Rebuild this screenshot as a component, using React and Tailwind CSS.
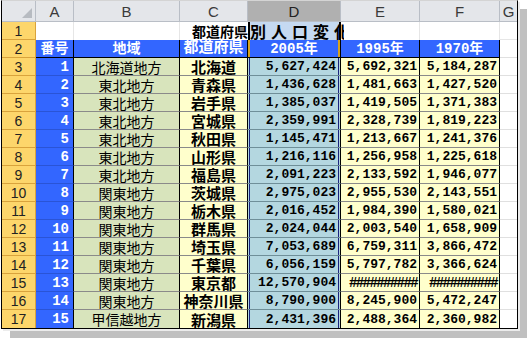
import React from 'react';

const rows = [
  [1, '北海道地方', '北海道', '5,627,424', '5,692,321', '5,184,287'],
  [2, '東北地方', '青森県', '1,436,628', '1,481,663', '1,427,520'],
  [3, '東北地方', '岩手県', '1,385,037', '1,419,505', '1,371,383'],
  [4, '東北地方', '宮城県', '2,359,991', '2,328,739', '1,819,223'],
  [5, '東北地方', '秋田県', '1,145,471', '1,213,667', '1,241,376'],
  [6, '東北地方', '山形県', '1,216,116', '1,256,958', '1,225,618'],
  [7, '東北地方', '福島県', '2,091,223', '2,133,592', '1,946,077'],
  [8, '関東地方', '茨城県', '2,975,023', '2,955,530', '2,143,551'],
  [9, '関東地方', '栃木県', '2,016,452', '1,984,390', '1,580,021'],
  [10, '関東地方', '群馬県', '2,024,044', '2,003,540', '1,658,909'],
  [11, '関東地方', '埼玉県', '7,053,689', '6,759,311', '3,866,472'],
  [12, '関東地方', '千葉県', '6,056,159', '5,797,782', '3,366,624'],
  [13, '関東地方', '東京都', '12,570,904', '##########', '##########'],
  [14, '関東地方', '神奈川県', '8,790,900', '8,245,900', '5,472,247'],
  [15, '甲信越地方', '新潟県', '2,431,396', '2,488,364', '2,360,982'],
];

const colLetters = ['A', 'B', 'C', 'D', 'E', 'F', 'G'];

const mono = "font-['Liberation_Mono','Noto_Sans_CJK_JP',monospace] font-bold";
const jp = "font-['Noto_Sans_CJK_JP',sans-serif]";

const RowHead = ({ n, last }) => (
  <div
    className={`flex items-center justify-center bg-[#fdd66b] border-r border-[#d9a33c] text-[14px] text-[#222] font-['Liberation_Sans',sans-serif] leading-none ${last ? 'border-b-0' : 'border-b'}`}
  >
    {n}
  </div>
);

// Excel fills a too-narrow number cell with hashes
const Hash = ({ text }) =>
  text.startsWith('#') ? <span className="text-[14px] tracking-[-1.6px]">{text}</span> : text;

const App = () => {
  return (
    <div className="w-[527px] h-[338px] bg-white overflow-hidden">
      <div className="ml-[1px] w-[517px] border-l border-r border-b border-black border-t border-t-[#d4d4d4] shadow-[2px_2px_0_#ececec,9px_9px_0_#c0c0c0] bg-white">
        <div className="relative grid grid-cols-[34px_38px_106px_68px_93px_79px_80px_17px] grid-rows-[21px_repeat(17,18px)]">
          {/* column headers */}
          <div className="relative bg-[#e4e6ea] border-r border-b border-[#b9bec6]">
            <svg className="absolute right-[3px] bottom-[3px]" width="10" height="10" viewBox="0 0 10 10">
              <polygon points="10,0 10,10 0,10" fill="#b7bbc1" />
            </svg>
          </div>
          {colLetters.map((c) => (
            <div
              key={c}
              className={`flex items-center justify-center border-r border-b border-[#b9bec6] text-[15px] leading-none font-['Liberation_Sans',sans-serif] ${
                c === 'D' ? 'bg-[#b0b0b0] text-[#222]' : 'bg-[#e4e6ea] text-[#3a3a3a]'
              } ${c === 'G' ? 'border-r-0' : ''}`}
            >
              {c}
            </div>
          ))}

          {/* row 1 */}
          <RowHead n={1} />
          <div className="bg-white border-r border-[#e6e6e6]" />
          <div className="bg-white border-r border-[#e6e6e6]" />
          <div className="bg-white" />
          <div className="bg-[#c5d9f1] shadow-[inset_2px_0_0_#000,inset_-2px_0_0_#000]" />
          <div className="bg-white border-r border-[#e6e6e6]" />
          <div className="bg-white border-r border-[#e6e6e6]" />
          <div className="bg-white border-b border-[#e6e6e6]" />

          {/* row 2 headers */}
          <RowHead n={2} />
          {['番号', '地域', '都道府県', '2005年', '1995年', '1970年'].map((h, i) => (
            <div
              key={h}
              className={`flex items-center justify-center bg-[#3366ff] text-white text-[14px] leading-none border-r border-b border-black ${mono} ${
                i === 3 ? 'shadow-[inset_2px_0_0_#d6a21e,inset_-2px_0_0_#d6a21e]' : ''
              } ${i === 2 ? 'text-[15px]' : ''}`}
            >
              {h}
            </div>
          ))}
          <div className="bg-white border-b border-[#e0e0e0]" />

          {/* data rows */}
          {rows.map((r, idx) => {
            const last = idx === rows.length - 1;
            const bb = last ? 'border-b-0' : 'border-b';
            return (
              <React.Fragment key={r[0]}>
                <RowHead n={idx + 3} last={last} />
                <div
                  className={`flex items-center justify-end pr-[4px] bg-[#3366ff] text-white text-[14px] leading-none border-r border-r-black border-b-[#2a54d6] ${bb} ${mono}`}
                >
                  {r[0]}
                </div>
                <div
                  className={`flex items-center justify-center bg-[#d8e4bc] text-[14px] text-black leading-none border-r border-r-black border-b-[#8a8a8a] ${bb} ${jp}`}
                >
                  {r[1]}
                </div>
                <div
                  className={`flex items-center justify-center bg-[#ffffcc] text-[15px] font-bold text-black leading-none border-r border-r-black border-b-[#8a8a8a] ${bb} ${jp}`}
                >
                  {r[2]}
                </div>
                <div
                  className={`flex items-center justify-end pr-[4px] bg-[#b4d7e0] text-[13px] text-black leading-none border-r border-r-black border-b-[#6f8f99] shadow-[inset_1px_0_0_#b4d7e0,inset_2px_0_0_#1a237e,inset_-1px_0_0_#b4d7e0,inset_-2px_0_0_#1a237e] ${bb} ${mono}`}
                >
                  {r[3]}
                </div>
                <div
                  className={`flex items-center justify-end pr-[2px] bg-[#ffffcc] text-[13px] text-black leading-none border-r border-r-black border-b-[#8a8a8a] ${bb} ${mono}`}
                >
                  <Hash text={r[4]} />
                </div>
                <div
                  className={`flex items-center justify-end pr-[2px] bg-[#ffffcc] text-[13px] text-black leading-none border-r border-r-black border-b-[#8a8a8a] ${bb} ${mono}`}
                >
                  <Hash text={r[5]} />
                </div>
                <div className={`bg-white border-b-[#e0e0e0] ${bb}`} />
              </React.Fragment>
            );
          })}

          <div className="absolute left-[190px] top-[21px] w-[152px] h-[18px] overflow-hidden flex items-center whitespace-nowrap text-black font-bold leading-none font-['Noto_Sans_CJK_JP',sans-serif]">
            <span className="text-[14px]">都道府県</span>
            <span className="text-[16px] tracking-[5px] ml-[2px]">別人口変化</span>
          </div>
        </div>
      </div>
    </div>
  );
};

export default App;
